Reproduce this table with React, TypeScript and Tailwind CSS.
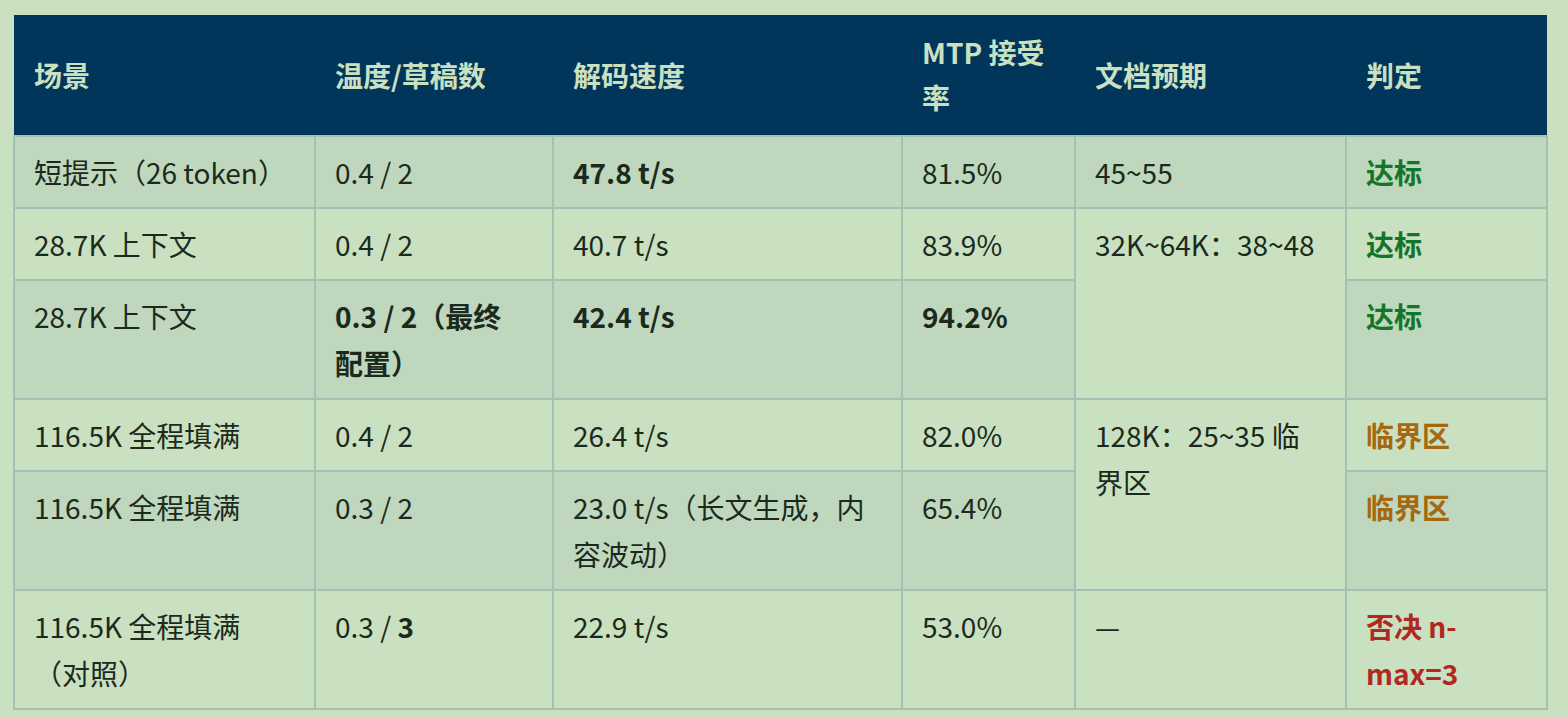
import React from "react";

type Cell = { text: React.ReactNode; bold?: boolean; tone?: "ok" | "warn" | "bad"; rowSpan?: number };

const headers = ["场景", "温度/草稿数", "解码速度", "MTP 接受率", "文档预期", "判定"];

const toneClass = {
    ok: "text-[#14752a] font-bold",
    warn: "text-[#a5680f] font-bold",
    bad: "text-[#b0281f] font-bold",
};

const rows: Cell[][] = [
    [
        { text: "短提示（26 token）" },
        { text: "0.4 / 2" },
        { text: "47.8 t/s", bold: true },
        { text: "81.5%" },
        { text: "45~55" },
        { text: "达标", tone: "ok" },
    ],
    [
        { text: "28.7K 上下文" },
        { text: "0.4 / 2" },
        { text: "40.7 t/s" },
        { text: "83.9%" },
        { text: "32K~64K：38~48", rowSpan: 2 },
        { text: "达标", tone: "ok" },
    ],
    [
        { text: "28.7K 上下文" },
        { text: "0.3 / 2（最终配置）", bold: true },
        { text: "42.4 t/s", bold: true },
        { text: "94.2%", bold: true },
        { text: "达标", tone: "ok" },
    ],
    [
        { text: "116.5K 全程填满" },
        { text: "0.4 / 2" },
        { text: "26.4 t/s" },
        { text: "82.0%" },
        { text: "128K：25~35 临界区", rowSpan: 2 },
        { text: "临界区", tone: "warn" },
    ],
    [
        { text: "116.5K 全程填满" },
        { text: "0.3 / 2" },
        { text: "23.0 t/s（长文生成，内容波动）" },
        { text: "65.4%" },
        { text: "临界区", tone: "warn" },
    ],
    [
        { text: "116.5K 全程填满（对照）" },
        {
            text: (
                <>
                    0.3 / <b>3</b>
                </>
            ),
        },
        { text: "22.9 t/s" },
        { text: "53.0%" },
        { text: "—" },
        { text: "否决 n-max=3", tone: "bad" },
    ],
];

export default function App() {
    return (
        <div className="min-h-[718px] w-full bg-[#c9e0c1] pt-[15px] pl-[13px] font-['Noto_Sans_CJK_SC','Noto_Sans',sans-serif]">
            <table className="w-[1533px] table-fixed border-collapse text-[28px] leading-[47px]">
                <colgroup>
                    <col className="w-[301px]" />
                    <col className="w-[238px]" />
                    <col className="w-[349px]" />
                    <col className="w-[173px]" />
                    <col className="w-[271px]" />
                    <col className="w-[201px]" />
                </colgroup>

                {/* Header */}
                <thead>
                    <tr className="h-[120px] bg-[#01365a]">
                        {headers.map((h) => (
                            <th
                                key={h}
                                className="pl-[20px] pr-[24px] py-[15px] text-left align-middle font-bold text-[#c9e0c1] leading-[45px]"
                            >
                                {h}
                            </th>
                        ))}
                    </tr>
                </thead>

                <tbody className="text-[#1b2a1c]">
                    {rows.map((row, i) => (
                        <tr key={i} className={i % 2 === 0 ? "bg-[#bfd7bd]" : "bg-[#c9e0c1]"}>
                            {row.map((c, j) => (
                                <td
                                    key={j}
                                    rowSpan={c.rowSpan}
                                    className={`border-2 border-[#a2c1b3] pl-[19px] pr-[24px] pt-[12px] pb-[11px] align-top ${
                                        c.rowSpan ? "bg-[#c9e0c1]" : ""
                                    } ${c.bold ? "font-bold" : ""} ${c.tone ? toneClass[c.tone] : ""}`}
                                >
                                    {c.text}
                                </td>
                            ))}
                        </tr>
                    ))}
                </tbody>
            </table>
        </div>
    );
}
